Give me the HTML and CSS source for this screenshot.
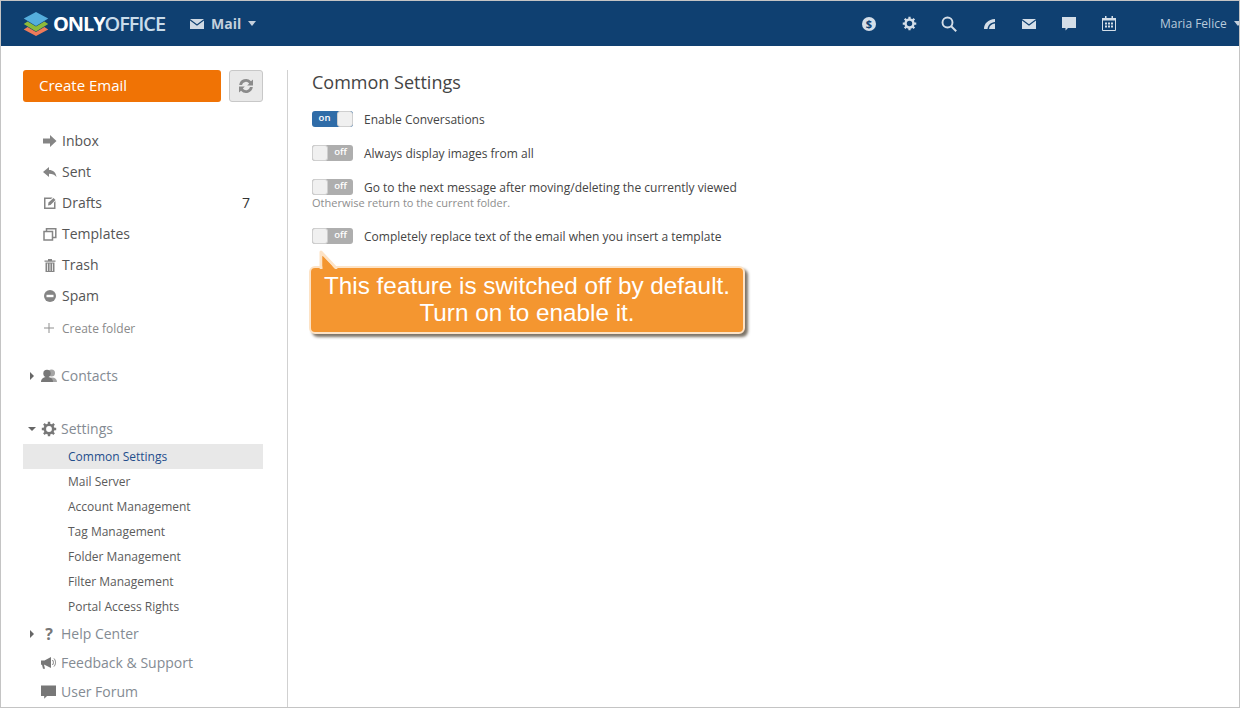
FILE: index.html
```html
<!DOCTYPE html>
<html lang="en">
<head>
<meta charset="utf-8">
<title>Mail - Common Settings</title>
<link rel="stylesheet" href="styles.css">
</head>
<body>
<div class="frame">
  <header class="topbar">
    <div class="brand">
      <svg class="logo" width="26" height="24" viewBox="0 0 34 24" preserveAspectRatio="none">
        <polygon points="1,17.5 6,15 17,20 28,15 33,17.5 17,24" fill="#ee7b5a"/>
        <polygon points="1,12 6,9.5 17,14.5 28,9.5 33,12 17,19.5" fill="#8dba3a"/>
        <polygon points="1,6.500 17,0 33,6.500 17,14" fill="#55aedd"/>
      </svg>
      <span class="wordmark"><b>ONLY</b><span class="office">OFFICE</span></span>
    </div>
    <div class="module">
      <svg width="14" height="10" viewBox="0 0 14 10"><path d="M0 0h14L7 5.200z" fill="#cfd9e3"/><path d="M0 1.600l7 5.200 7-5.200V10H0z" fill="#cfd9e3"/></svg>
      <span>Mail</span>
      <i class="caret caret-light"></i>
    </div>
    <nav class="tools">
      <span class="slot"><svg width="14" height="14" viewBox="0 0 14 14"><circle cx="7" cy="7" r="7" fill="#d4dee8"/><text x="7" y="11" text-anchor="middle" class="dollar">$</text></svg></span>
      <span class="slot"><svg width="15" height="15" viewBox="0 0 16 16"><circle cx="8" cy="8" r="4.200" fill="none" stroke="#d4dee8" stroke-width="2.600"/><path d="M8 .8v3M8 12.200v3M.8 8h3M12.200 8h3M2.900 2.900l2.100 2.100M11 11l2.100 2.100M2.900 13.100L5 11M11 5l2.100-2.100" stroke="#d4dee8" stroke-width="2.400"/></svg></span>
      <span class="slot"><svg width="16" height="16" viewBox="0 0 16 16"><circle cx="6.500" cy="6.500" r="5" fill="none" stroke="#d4dee8" stroke-width="1.900"/><path d="M10.200 10.200l5 5" stroke="#d4dee8" stroke-width="2"/></svg></span>
      <span class="slot"><svg width="11" height="10" viewBox="0 0 11 10"><path d="M0 10C0 4.500 4 .5 11 0v3C7 3.300 4 6 3.500 10zM5 10C5.300 7 7.500 5 11 4.600V10z" fill="#d4dee8"/></svg></span>
      <span class="slot"><svg width="14" height="10" viewBox="0 0 14 10"><path d="M0 0h14L7 5.200z" fill="#d4dee8"/><path d="M0 1.600l7 5.200 7-5.200V10H0z" fill="#d4dee8"/></svg></span>
      <span class="slot"><svg width="14" height="14" viewBox="0 0 14 14"><path d="M0 0h14v11H6l-2.500 2.500V11H0z" fill="#d4dee8"/></svg></span>
      <span class="slot"><svg width="14" height="15" viewBox="0 0 14 15"><path d="M.5 2.500h13v12H.5z" fill="none" stroke="#d4dee8"/><path d="M0 2h14v2.500H0zM3 0h1.500v3H3zM9.500 0H11v3H9.500z" fill="#d4dee8"/><path d="M3 6.500h2v2H3zM6 6.500h2v2H6zM9 6.500h2v2H9zM3 9.500h2v2H3zM6 9.500h2v2H6zM9 9.500h2v2H9z" fill="#d4dee8"/></svg></span>
    </nav>
    <div class="user"><span>Maria Felice</span><i class="caret caret-light"></i></div>
  </header>

  <div class="body">
    <aside class="sidebar">
      <div class="actions">
        <button class="create">Create Email</button>
        <button class="refresh" aria-label="Refresh">
          <svg width="16" height="16" viewBox="0 0 16 16"><path d="M1.200 7A6.800 6.800 0 0 1 13 3.300L15 1.500v6H9.200l2-2A4 4 0 0 0 4 7z" fill="#8b8b8b"/><path d="M14.800 9A6.800 6.800 0 0 1 3 12.700L1 14.500v-6h5.800l-2 2A4 4 0 0 0 12 9z" fill="#8b8b8b"/></svg>
        </button>
      </div>
      <ul class="folders">
        <li><svg width="14" height="14" viewBox="0 0 14 14"><path d="M0 4.500h7V1l6.500 6L7 13V9.500H0z" fill="#858585"/></svg><span>Inbox</span></li>
        <li><svg width="14" height="14" viewBox="0 0 14 14"><path d="M0 7l6-5v3c4 0 7 2.500 7.500 7-2-2.500-4-3.200-7.500-3.200V12z" fill="#858585"/></svg><span>Sent</span></li>
        <li><svg width="14" height="14" viewBox="0 0 14 14"><path d="M1 1.500h8.500L8 3H2.500v8.500H11V6.500l1.500-1.500v8H1z" fill="#858585"/><path d="M5.500 6.500L10.500 2l2 2-5 5-2.500.5z" fill="#858585"/></svg><span>Drafts</span><em>7</em></li>
        <li><svg width="14" height="14" viewBox="0 0 14 14"><path d="M1 4.500h8.500V13H1z M3.500 4.500V1.700H12.800V10.500H9.500" fill="none" stroke="#858585" stroke-width="1.500"/></svg><span>Templates</span></li>
        <li><svg width="14" height="14" viewBox="0 0 14 14"><path d="M1.500 2.500h11v1.300h-11zM5 1h4v1.500H5z" fill="#858585"/><path d="M2.500 4.500h9V14h-9z" fill="#858585"/><path d="M4.500 5.500v7.500M7 5.500v7.500M9.500 5.500v7.500" stroke="#fff" stroke-width=".8"/></svg><span>Trash</span></li>
        <li><svg width="14" height="14" viewBox="0 0 14 14"><circle cx="7" cy="7" r="6" fill="#858585"/><path d="M3.500 5.800h7v2.400h-7z" fill="#fff"/></svg><span>Spam</span></li>
        <li class="new-folder"><svg width="10" height="10" viewBox="0 0 10 10"><path d="M5 0v10M0 5h10" stroke="#8f8f8f"/></svg><span>Create folder</span></li>
      </ul>

      <div class="section contacts">
        <i class="caret-right"></i>
        <svg width="16" height="14" viewBox="0 0 16 14"><circle cx="10.500" cy="4" r="3.500" fill="#a5a5a5"/><path d="M6 13c0-3 2-4.500 5-4.500s5 1.500 5 4.500z" fill="#a5a5a5"/><circle cx="6" cy="4.500" r="3.700" fill="#777"/><path d="M0 13c0-3.500 2.500-5 6-5s6 1.500 6 5z" fill="#777"/></svg>
        <span>Contacts</span>
      </div>

      <div class="section settings">
        <i class="caret caret-dark"></i>
        <svg width="16" height="16" viewBox="0 0 16 16"><circle cx="8" cy="8" r="4.200" fill="none" stroke="#777" stroke-width="2.600"/><path d="M8 .8v3M8 12.200v3M.8 8h3M12.200 8h3M2.900 2.900l2.100 2.100M11 11l2.100 2.100M2.900 13.100L5 11M11 5l2.100-2.100" stroke="#777" stroke-width="2.400"/></svg>
        <span>Settings</span>
      </div>
      <ul class="sublist">
        <li class="active">Common Settings</li>
        <li>Mail Server</li>
        <li>Account Management</li>
        <li>Tag Management</li>
        <li>Folder Management</li>
        <li>Filter Management</li>
        <li>Portal Access Rights</li>
      </ul>

      <div class="section help">
        <i class="caret-right"></i>
        <span class="qmark">?</span>
        <span>Help Center</span>
      </div>
      <div class="section feedback">
        <svg width="15" height="14" viewBox="0 0 15 14"><path d="M0 4.500h3.500L10 1v11L3.500 8.800H3l1 4H2L1 8.800H0z" fill="#777"/><path d="M11.500 4c1.200 1.500 1.200 3.500 0 5M13 2.500c2 2.500 2 5.500 0 8" fill="none" stroke="#777"/></svg>
        <span>Feedback &amp; Support</span>
      </div>
      <div class="section forum">
        <svg width="15" height="14" viewBox="0 0 15 14"><path d="M0 .5h15v10.500H6l-2.800 2.800V11H0z" fill="#777"/></svg>
        <span>User Forum</span>
      </div>
    </aside>

    <main class="content">
      <h1>Common Settings</h1>
      <div class="option">
        <div class="toggle on"><span class="lbl">on</span><span class="knob"></span></div>
        <label>Enable Conversations</label>
      </div>
      <div class="option">
        <div class="toggle"><span class="knob"></span><span class="lbl">off</span></div>
        <label>Always display images from all</label>
      </div>
      <div class="option">
        <div class="toggle"><span class="knob"></span><span class="lbl">off</span></div>
        <label>Go to the next message after moving/deleting the currently viewed</label>
      </div>
      <p class="note">Otherwise return to the current folder.</p>
      <div class="option">
        <div class="toggle"><span class="knob"></span><span class="lbl">off</span></div>
        <label>Completely replace text of the email when you insert a template</label>
      </div>
    </main>
  </div>

  <div class="callout">
    <svg class="tail" width="34" height="26" viewBox="0 0 34 26"><path d="M10 6 L10 22 L25 22 Z" fill="#f49630" stroke="#fde3c6" stroke-width="3" stroke-linejoin="round"/><path d="M4 23h30v4H4z" fill="#f49630"/><path d="M11.500 10 L11.500 23 L24 23 Z" fill="#f49630"/></svg>
    This feature is switched off by default.<br>Turn on to enable it.
  </div>
</div>
</body>
</html>
```
FILE: styles.css
```css
* { box-sizing: border-box; }
html, body { margin: 0; padding: 0; height: 100%; }
body { font-family: "Open Sans", "Liberation Sans", sans-serif; background: #fff; color: #333; overflow: hidden; }
ul { list-style: none; margin: 0; padding: 0; }

.frame { position: relative; width: 1240px; height: 708px; border: 1px solid #c4c4c4; display: flex; flex-direction: column; overflow: hidden; }

.topbar { height: 45px; flex: none; background: #0f4071; display: flex; align-items: center; color: #d4dee8; }
.brand { display: flex; align-items: center; margin-left: 22px; width: 167px; flex: none; }
.logo { flex: none; margin-right: 4px; }
.wordmark { font-size: 20px; letter-spacing: -1.1px; color: #fff; white-space: nowrap; }
.wordmark b { font-weight: 700; }
.office { font-weight: 600; color: #c9dcea; }
.module { display: flex; align-items: center; gap: 7px; font-size: 14px; font-weight: 700; color: #c5d0dc; width: 659px; flex: none; }
.caret { display: inline-block; width: 0; height: 0; border-left: 4.500px solid transparent; border-right: 4.500px solid transparent; border-top: 5px solid; }
.caret-light { border-top-color: #c5d0dc; }
.caret-dark { border-top-color: #666; border-left-width: 4px; border-right-width: 4px; border-top-width: 4px; }
.tools { display: flex; align-items: center; flex: none; }
.slot { width: 40px; height: 45px; display: flex; align-items: center; justify-content: center; }
.dollar { font-size: 11px; font-weight: 700; fill: #0f4071; font-family: "Open Sans", sans-serif; }
.user { display: flex; align-items: center; gap: 7px; font-size: 12px; color: #b9cbdc; white-space: nowrap; margin-left: 31px; }

.body { display: flex; flex: 1; min-height: 0; }
.sidebar { width: 287px; flex: none; height: 661px; border-right: 1px solid #d1d1d1; margin-top: 24px; padding-left: 22px; padding-right: 24px; font-size: 14px; color: #7c7c7c; }
.actions { display: flex; gap: 8px; height: 32px; }
.create { width: 198px; height: 32px; background: #f07305; color: #fff; border: 0; border-radius: 3px; text-align: left; padding: 0 0 2px 16px; font: 400 15px "Open Sans", sans-serif; }
.refresh { width: 34px; height: 32px; background: #e9e9e9; border: 1px solid #c8c8c8; border-radius: 3px; padding: 0; display: flex; align-items: center; justify-content: center; }

.folders { margin-top: 23px; }
.folders li { height: 31px; display: flex; align-items: center; padding-left: 20px; color: #555; position: relative; font-size: 14px; }
.folders li svg { width: 14px; margin-right: 5px; flex: none; }
.folders em { margin-left: auto; font-style: normal; color: #333; margin-right: 13px; }
.folders .new-folder { font-size: 12px; color: #8a8a8a; padding-left: 21px; height: 34px; }
.folders .new-folder svg { width: 10px; margin-right: 8px; }

.section { display: flex; align-items: center; height: 29px; padding-left: 6px; font-size: 14px; color: #848b93; position: relative; }
.section svg { flex: none; margin-right: 4px; }
.caret-right { width: 0; height: 0; border-top: 4px solid transparent; border-bottom: 4px solid transparent; border-left: 4px solid #666; margin-right: 7px; margin-left: 1px; flex: none; }
.contacts { margin-top: 16px; }
.settings { margin-top: 24px; height: 29px; padding-left: 5px; }
.settings .caret { margin-right: 5px; }
.help { height: 29px; }
.qmark { width: 16px; margin-right: 4px; color: #777; font-weight: 700; font-size: 16px; text-align: center; flex: none; }
.feedback, .forum { padding-left: 18px; }
.feedback svg, .forum svg { margin-right: 5px; }

.sublist { margin-top: 1px; }
.sublist li { height: 25px; line-height: 25px; padding-left: 45px; font-size: 12px; color: #5b5b5b; white-space: nowrap; }
.sublist .active { background: #e8e8e8; color: #1f4e8c; }

.content { flex: 1; padding: 24px 0 0 24px; }
h1 { font-size: 18px; font-weight: 400; color: #444; margin: 0; height: 25px; line-height: 25px; }
.option { display: flex; align-items: center; gap: 11px; height: 16px; margin-top: 18px; font-size: 12px; color: #444; }
.option:first-of-type { margin-top: 16px; }
.option label { white-space: nowrap; }
.note { margin: 1px 0 0; font-size: 11px; line-height: 14px; color: #8e8e8e; }
.toggle { width: 41px; height: 16px; border-radius: 3px; display: flex; background: #aeaeae; overflow: hidden; flex: none; }
.toggle .lbl { flex: 1; text-align: center; color: #fff; font-size: 9.500px; font-weight: 600; line-height: 14px; }
.toggle .knob { width: 16px; height: 16px; background: #f0f0f0; border: 1px solid #cfcfcf; border-radius: 3px; flex: none; }
.toggle.on { background: #2f6ca8; }

.callout { position: absolute; left: 308px; top: 265px; width: 436px; height: 68px; background: #f49630; color: #fff; border-radius: 6px; border: 2px solid #fde3c6; box-shadow: 3px 3px 3px #7d7468; font-family: "Liberation Sans", Arial, sans-serif; font-size: 24.300px; line-height: 27px; text-align: center; padding-top: 4px; }
.tail { position: absolute; left: 0; top: -22px; }
```
